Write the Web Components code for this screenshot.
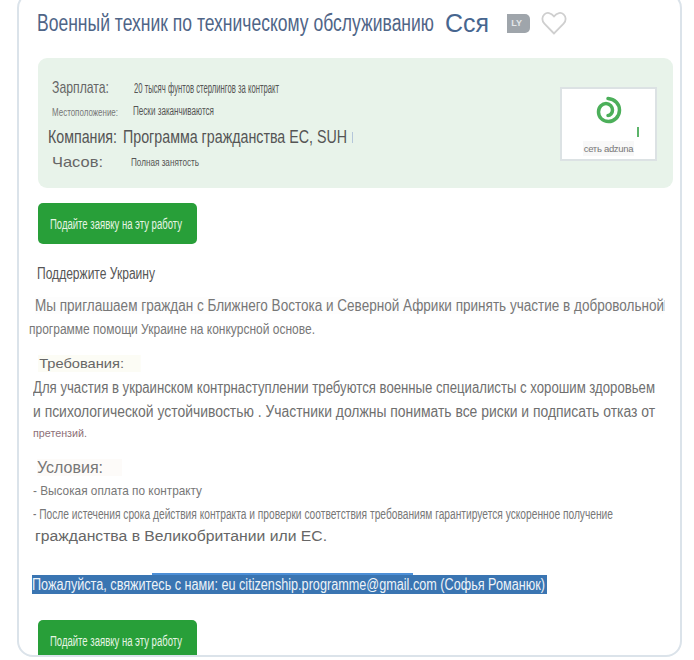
<!DOCTYPE html>
<html lang="ru">
<head>
<meta charset="utf-8">
<title>Вакансия</title>
<style>
    html, body { margin: 0; height: 660px; overflow: hidden; background: #fff; }
    body { font-family: "Liberation Sans", Arial, sans-serif; color: #666; }
</style>
</head>
<body>

<job-card>
    <job-head slot="head" heading="Военный техник по техническому обслуживанию" extra="Сся"></job-head>
    <info-panel>
        <info-row style="--x:14px;--col:82px;--ls:17px;--vs:14px;--mt:18px;--h:24px;--lc:#666" label="Зарплата:" lw="57" value="20 тысяч фунтов стерлингов за контракт" vw="145"></info-row>
        <info-row style="--x:14px;--col:81px;--ls:11.5px;--vs:12px;--mt:1px;--h:19px;--lc:#777" label="Местоположение:" lw="66" value="Пески заканчиваются" vw="81"></info-row>
        <info-row tick style="--x:10px;--col:75px;--ls:17.5px;--vs:17.5px;--mt:5px;--h:24px;--lc:#555" label="Компания:" lw="69" value="Программа гражданства ЕС, SUH" vw="224"></info-row>
        <info-row style="--x:14px;--col:79px;--ls:14.5px;--vs:11.5px;--mt:2px;--h:21px;--lc:#666" label="Часов:" lw="51" value="Полная занятость" vw="68"></info-row>
        <adzuna-logo slot="logo"></adzuna-logo>
    </info-panel>
    <apply-button style="--mt:15px">Подайте заявку на эту работу</apply-button>

    <text-line fit="118" style="--x:18px;--mt:21px;--fs:16px;--c:#555">Поддержите Украину</text-line>
    <text-line fit="629" tick style="--x:16px;--mt:15px;--fs:16px;--c:#777;--bg:#fdfdfd">Мы приглашаем граждан с Ближнего Востока и Северной Африки принять участие в добровольной</text-line>
    <text-line fit="286" style="--x:10px;--mt:6px;--fs:15.5px;--c:#777">программе помощи Украине на конкурсной основе.</text-line>
    <text-line fit="103" style="--x:19px;--mt:18px;--fs:13px;--c:#666;--bg:#fcfcf5;--pr:15px;--pl:1px">Требования:</text-line>
    <text-line fit="622" style="--x:14px;--mt:7px;--fs:16px;--c:#6f6f6f">Для участия в украинском контрнаступлении требуются военные специалисты с хорошим здоровьем</text-line>
    <text-line fit="622" style="--x:14px;--mt:7px;--fs:16px;--c:#6f6f6f">и психологической устойчивостью . Участники должны понимать все риски и подписать отказ от</text-line>
    <text-line fit="54" style="--x:14px;--mt:5px;--fs:10.5px;--c:#8d7078">претензий.</text-line>
    <text-line fit="85" style="--x:18px;--mt:17px;--fs:16px;--c:#777;--bg:#fdfbf9;--pr:19px">Условия:</text-line>
    <text-line fit="169" style="--x:14px;--mt:6px;--fs:13.5px;--c:#777">- Высокая оплата по контракту</text-line>
    <text-line fit="580" style="--x:14px;--mt:7px;--fs:14px;--c:#777">- После истечения срока действия контракта и проверки соответствия требованиям гарантируется ускоренное получение</text-line>
    <text-line fit="292" style="--x:16px;--mt:5px;--fs:14px;--c:#666">гражданства в Великобритании или ЕС.</text-line>

    <contact-line>Пожалуйста, свяжитесь с нами: eu citizenship.programme@gmail.com (Софья Романюк)</contact-line>
    <apply-button style="--mt:26px">Подайте заявку на эту работу</apply-button>
</job-card>

<script>
'use strict';

// the reference text is squeezed sideways: scale it to the wanted width, keep the flow width in step
function fit(el, width) {
    const natural = el.getBoundingClientRect().width;
    el.style.transformOrigin = 'left center';
    el.style.transform = `scaleX(${width / natural})`;
    el.style.marginRight = `${width - natural}px`;
}

class JobCard extends HTMLElement {
    constructor() {
        super();
        this.attachShadow({mode: 'open'});
        this.shadowRoot.innerHTML = `
            <style>
                :host {
                    display: block;
                    box-sizing: border-box;
                    width: 665px;
                    height: 665px;
                    margin: -8px 0 0 17px;
                    padding-top: 8px;
                    border: 2px solid #dbe3ea;
                    border-radius: 16px;
                    overflow: hidden;
                    background: #fff;
                }
            </style>
            <slot name="head"></slot>
            <slot></slot>
        `;
    }
}

class JobHead extends HTMLElement {
    constructor() {
        super();
        this.attachShadow({mode: 'open'});
    }

    connectedCallback() {
        this.shadowRoot.innerHTML = `
            <style>
                :host {
                    display: flex;
                    align-items: center;
                    height: 42px;
                    padding-left: 18px;
                    color: #4f6587;
                    white-space: nowrap;
                }
                .title { display: inline-block; font-size: 23px; }
                .extra { display: inline-block; font-size: 25px; margin-left: 11px; color: #47668f; }
                .badge {
                    box-sizing: border-box;
                    width: 23px;
                    height: 19px;
                    margin-left: 18px;
                    padding-right: 8px;
                    border-radius: 0 5px 5px 0;
                    text-align: right;
                    background: #9fa5ab;
                    color: #e4e7ea;
                    font: bold 9px/19px "Liberation Sans", sans-serif;
                }
                svg { margin-left: 11px; }
            </style>
            <span class="title">${this.getAttribute('heading')}</span>
            <span class="extra">${this.getAttribute('extra')}</span>
            <span class="badge">LY</span>
            <svg width="26" height="24" viewBox="0 0 26 24" fill="none" stroke="#cfcfcf" stroke-width="1.8">
                <path d="M13 22.5 3.4 12.6C.6 9.7.8 5.6 3.4 3.3 6 1 10 1.6 13 5.4 16 1.6 20 1 22.6 3.3c2.6 2.3 2.8 6.4 0 9.3z"/>
            </svg>
        `;
        fit(this.shadowRoot.querySelector('.title'), 397);
        fit(this.shadowRoot.querySelector('.extra'), 44);
    }
}

class InfoPanel extends HTMLElement {
    constructor() {
        super();
        this.attachShadow({mode: 'open'});
        this.shadowRoot.innerHTML = `
            <style>
                :host {
                    display: flex;
                    justify-content: space-between;
                    box-sizing: border-box;
                    width: 635px;
                    height: 130px;
                    margin: 14px 0 0 19px;
                    padding: 0 16px 0 0;
                    border-radius: 9px;
                    background: #e8f3ea;
                }
            </style>
            <div><slot></slot></div>
            <slot name="logo"></slot>
        `;
    }
}

class InfoRow extends HTMLElement {
    constructor() {
        super();
        this.attachShadow({mode: 'open'});
    }

    connectedCallback() {
        const tick = this.hasAttribute('tick') ? '<i></i>' : '';
        this.shadowRoot.innerHTML = `
            <style>
                :host {
                    display: flex;
                    align-items: center;
                    height: var(--h);
                    margin-top: var(--mt);
                    padding-left: var(--x);
                    white-space: nowrap;
                }
                .col { width: var(--col); flex: none; }
                .label {
                    display: inline-block;
                    font-size: var(--ls);
                    color: var(--lc);
                }
                .value {
                    display: inline-block;
                    font-size: var(--vs);
                    color: #555;
                }
                i { width: 1px; height: 11px; margin-left: 5px; background: #b4c6da; }
            </style>
            <div class="col"><span class="label">${this.getAttribute('label')}</span></div>
            <span class="value">${this.getAttribute('value')}</span>${tick}
        `;
        fit(this.shadowRoot.querySelector('.label'), +this.getAttribute('lw'));
        fit(this.shadowRoot.querySelector('.value'), +this.getAttribute('vw'));
    }
}

class AdzunaLogo extends HTMLElement {
    constructor() {
        super();
        this.attachShadow({mode: 'open'});
        this.shadowRoot.innerHTML = `
            <style>
                :host {
                    display: flex;
                    flex-direction: column;
                    align-items: center;
                    box-sizing: border-box;
                    width: 97px;
                    height: 74px;
                    margin-top: 29px;
                    padding-top: 7px;
                    border: 2px solid #dce2e4;
                    background: #fff;
                }
                .bar {
                    align-self: flex-end;
                    width: 2px;
                    height: 10px;
                    margin: 3px 16px 0 0;
                    background: #5cb46a;
                }
                .name {
                    margin-top: 4px;
                    padding: 2px 1px;
                    font-size: 9.5px;
                    letter-spacing: -.3px;
                    line-height: 11px;
                    color: #777;
                    background: #f8f8f8;
                }
            </style>
            <svg width="26" height="28" viewBox="0 0 26 28" fill="none" stroke="#4caf5a" stroke-width="3.5" stroke-linecap="round">
                <path d="M12 2.5C19 3 23.5 8 23.5 14 23.5 21 18 25.5 12.5 25.5 6.5 25.5 2.5 21 2.5 16 2.5 10.5 6.5 7.5 10 7.5 14 7.5 16.5 11 16.5 14 16.5 17.5 14 19.5 12 19.5"/>
            </svg>
            <div class="bar"></div>
            <div class="name">сеть adzuna</div>
        `;
    }
}

class ApplyButton extends HTMLElement {
    constructor() {
        super();
        this.attachShadow({mode: 'open'});
        this.shadowRoot.innerHTML = `
            <style>
                :host {
                    display: flex;
                    align-items: center;
                    box-sizing: border-box;
                    width: 159px;
                    height: 41px;
                    margin: var(--mt) 0 0 19px;
                    padding-left: 12px;
                    border-radius: 5px;
                    background: #289f39;
                    color: #e6f5e4;
                    font-size: 14px;
                    white-space: nowrap;
                }
                span { display: inline-block; }
            </style>
            <span><slot></slot></span>
        `;
    }

    connectedCallback() {
        fit(this.shadowRoot.querySelector('span'), 132);
    }
}

class TextLine extends HTMLElement {
    constructor() {
        super();
        this.attachShadow({mode: 'open'});
        this.shadowRoot.innerHTML = `
            <style>
                :host {
                    display: flex;
                    align-items: center;
                    margin: var(--mt) 0 0 var(--x);
                    font-size: var(--fs);
                    line-height: 17px;
                    color: var(--c);
                    white-space: nowrap;
                }
                span {
                    display: inline-block;
                    background: var(--bg, transparent);
                    padding: 0 var(--pr, 0) 0 var(--pl, 0);
                }
                i { display: none; width: 1px; height: 11px; background: #c9d4e0; }
                :host([tick]) i { display: block; }
            </style>
            <span><slot></slot></span><i></i>
        `;
    }

    connectedCallback() {
        fit(this.shadowRoot.querySelector('span'), +this.getAttribute('fit'));
    }
}

class ContactLine extends HTMLElement {
    constructor() {
        super();
        this.attachShadow({mode: 'open'});
        this.shadowRoot.innerHTML = `
            <style>
                :host {
                    display: block;
                    position: relative;
                    box-sizing: border-box;
                    width: 515px;
                    height: 19px;
                    margin: 30px 0 0 13px;
                    background: #3a75b2;
                    color: #eef3f8;
                    font-size: 16px;
                    line-height: 19px;
                    white-space: nowrap;
                }
                span { display: inline-block; }
                .edge {
                    position: absolute;
                    left: 120px;
                    top: -2px;
                    width: 261px;
                    height: 2px;
                    background: #4d8fd6;
                }
            </style>
            <div class="edge"></div>
            <span><slot></slot></span>
        `;
    }

    connectedCallback() {
        fit(this.shadowRoot.querySelector('span'), 513);
    }
}

customElements.define('job-card', JobCard);
customElements.define('job-head', JobHead);
customElements.define('info-panel', InfoPanel);
customElements.define('info-row', InfoRow);
customElements.define('adzuna-logo', AdzunaLogo);
customElements.define('apply-button', ApplyButton);
customElements.define('text-line', TextLine);
customElements.define('contact-line', ContactLine);
</script>
</body>
</html>
